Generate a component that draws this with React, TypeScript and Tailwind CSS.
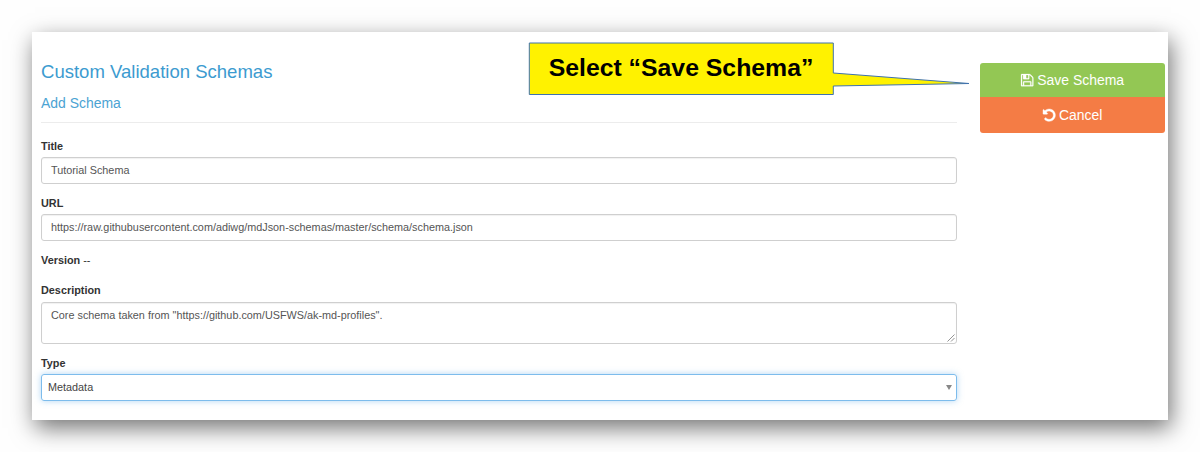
import type { ReactNode } from "react";

function Field({ label, children }: { label: string; children: ReactNode }) {
  return (
    <div className="flex flex-col">
      <label className="h-[18px] text-[10.85px] leading-[15px] font-bold text-[#333333]">{label}</label>
      {children}
    </div>
  );
}

function TextBox({ value }: { value: string }) {
  return (
    <div className="flex h-[27px] items-center rounded-[3px] border border-[#cfcfcf] px-[9px] text-[10.83px] text-[#555555] shadow-[inset_0_1px_1px_rgba(0,0,0,0.06)]">
      {value}
    </div>
  );
}

function FloppyIcon() {
  return (
    <svg className="size-[14.4px]" viewBox="0 0 1792 1792" fill="currentColor" stroke="currentColor" strokeWidth="30">
      <path d="M512 1536h768v-384h-768v384zm896 0h128v-896q0-14-10-38.5t-20-34.5l-281-281q-10-10-34-20t-39-10v416q0 40-28 68t-68 28h-576q-40 0-68-28t-28-68v-416h-128v1280h128v-416q0-40 28-68t68-28h832q40 0 68 28t28 68v416zm-384-928v-320q0-13-9.5-22.5t-22.5-9.5h-192q-13 0-22.5 9.5t-9.5 22.5v320q0 13 9.5 22.5t22.5 9.5h192q13 0 22.5-9.5t9.5-22.5zm640 32v928q0 40-28 68t-68 28h-1344q-40 0-68-28t-28-68v-1344q0-40 28-68t68-28h928q40 0 88 20t76 48l280 280q28 28 48 76t20 88z" />
    </svg>
  );
}

function UndoIcon() {
  return (
    <svg className="size-[14.4px]" viewBox="0 0 1792 1792" fill="currentColor" stroke="currentColor" strokeWidth="50">
      <path d="M1664 896q0 156-61 298t-164 245-245 164-298 61q-172 0-327-72.5t-264-204.5q-7-10-6.5-22.5t8.5-20.5l137-138q10-9 25-9 16 2 23 12 73 95 179 147t225 52q104 0 198.5-40.5t163.5-109.5 109.5-163.5 40.5-198.5-40.5-198.5-109.5-163.5-163.5-109.5-198.5-40.5q-98 0-188 35.5t-160 101.5l137 138q31 30 14 69-17 40-59 40h-448q-26 0-45-19t-19-45v-448q0-42 40-59 39-17 69 14l130 129q107-101 244.5-156.5t284.5-55.5q156 0 298 61t245 164 164 245 61 298z" />
    </svg>
  );
}

function Callout() {
  return (
    <div className="absolute top-[10px] left-[496px] h-[54px] w-[444px]">
      <svg className="absolute inset-0" width="444" height="54" viewBox="0 0 444 54">
        <path
          d="M1.3 1H305.3V31L441 41.5L305.3 44V52.5H1.3Z"
          fill="#fff200"
          stroke="#3f72ae"
          strokeWidth="1"
        />
      </svg>
      <div className="relative flex h-[52px] w-[306px] items-center justify-center text-[24.8px] font-bold whitespace-nowrap text-black">
        Select “Save Schema”
      </div>
    </div>
  );
}

export default function App() {
  return (
    <div className="h-[452px] w-[1200px] overflow-hidden bg-[#fefefe] p-8 font-['Liberation_Sans',Arial,sans-serif]">
      <div className="relative flex h-[388px] w-[1136px] bg-white pr-[3px] pl-[9px] shadow-[3px_8px_22px_rgba(0,0,0,0.55)]">
        <main className="w-[915.5px] pt-[28px]">
          <h1 className="h-[33px] text-[18.55px] leading-[24px] text-[#3c9bd0]">Custom Validation Schemas</h1>
          <h2 className="h-[30px] border-b border-[#ececec] text-[13.95px] leading-[20px] text-[#4ba3d3]">Add Schema</h2>
          <div className="mt-[16px] flex flex-col">
            <Field label="Title">
              <TextBox value="Tutorial Schema" />
            </Field>
            <div className="mt-[12px]">
              <Field label="URL">
                <TextBox value="https://raw.githubusercontent.com/adiwg/mdJson-schemas/master/schema/schema.json" />
              </Field>
            </div>
            <div className="mt-[12px] h-[30px] text-[10.85px] leading-[15px] text-[#333333]">
              <span className="font-bold">Version</span> --
            </div>
            <Field label="Description">
              <div className="mt-px flex h-[42px] items-end justify-between rounded-[3px] border border-[#cfcfcf] pl-[9px] text-[10.83px] text-[#555555] shadow-[inset_0_1px_1px_rgba(0,0,0,0.06)]">
                <p className="self-start pt-[5px] leading-[15px]">
                  Core schema taken from "https://github.com/USFWS/ak-md-profiles".
                </p>
                <svg width="9" height="9" viewBox="0 0 9 9" fill="none" stroke="#777777" strokeWidth="0.8">
                  <path d="M0.5 7.5L7.5 0.5M4 7.5L7.5 4" />
                </svg>
              </div>
            </Field>
            <div className="mt-[12px]">
              <Field label="Type">
                <div className="flex h-[27px] items-center justify-between rounded-[3px] border border-[#7dbcec] pr-[4px] pl-[6px] text-[10.83px] text-[#444444] shadow-[0_0_6px_rgba(102,175,233,0.5)]">
                  Metadata
                  <svg width="6" height="5" viewBox="0 0 6 5" fill="#888888">
                    <path d="M0 0H6L3 5Z" />
                  </svg>
                </div>
              </Field>
            </div>
          </div>
        </main>
        <aside className="ml-auto flex w-[185.5px] flex-col pt-[31px] text-[13.95px] text-white">
          <button className="flex h-[34px] items-center justify-center gap-[2.5px] rounded-t-[3px] bg-[#93c754]">
            <FloppyIcon />
            Save Schema
          </button>
          <button className="flex h-[36px] items-center justify-center gap-[2.5px] rounded-b-[3px] bg-[#f47c45]">
            <UndoIcon />
            Cancel
          </button>
        </aside>
        <Callout />
      </div>
    </div>
  );
}
